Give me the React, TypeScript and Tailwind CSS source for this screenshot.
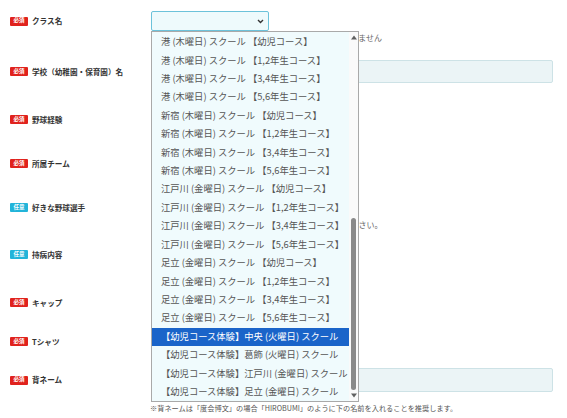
import React from "react";

const options = [
    "港 (木曜日) スクール 【幼児コース】",
    "港 (木曜日) スクール 【1,2年生コース】",
    "港 (木曜日) スクール 【3,4年生コース】",
    "港 (木曜日) スクール 【5,6年生コース】",
    "新宿 (木曜日) スクール 【幼児コース】",
    "新宿 (木曜日) スクール 【1,2年生コース】",
    "新宿 (木曜日) スクール 【3,4年生コース】",
    "新宿 (木曜日) スクール 【5,6年生コース】",
    "江戸川 (金曜日) スクール 【幼児コース】",
    "江戸川 (金曜日) スクール 【1,2年生コース】",
    "江戸川 (金曜日) スクール 【3,4年生コース】",
    "江戸川 (金曜日) スクール 【5,6年生コース】",
    "足立 (金曜日) スクール 【幼児コース】",
    "足立 (金曜日) スクール 【1,2年生コース】",
    "足立 (金曜日) スクール 【3,4年生コース】",
    "足立 (金曜日) スクール 【5,6年生コース】",
    "【幼児コース体験】中央 (火曜日) スクール",
    "【幼児コース体験】葛飾 (火曜日) スクール",
    "【幼児コース体験】江戸川 (金曜日) スクール",
    "【幼児コース体験】足立 (金曜日) スクール",
];

const Badge = ({required}: { required: boolean }) => (
    <span
        className={`flex h-[9px] w-[18px] items-center justify-center rounded-[1px] text-[5.5px] font-bold leading-none text-white ${required ? "bg-[#e0221d]" : "bg-[#22b4d9]"}`}>
        {required ? "必須" : "任意"}
    </span>
);

const Label = ({required, text}: { required: boolean; text: string }) => (
    <div className="flex h-[23px] w-[151px] shrink-0 items-center gap-[4px] pl-[10px]">
        <Badge required={required}/>
        <span className="text-[7.6px] font-bold text-[#333]">{text}</span>
    </div>
);

const SmallSelect = () => (
    <div className="h-[23px] w-[118px] rounded-[2px] border border-[#cde2e6] bg-[#ebf4f6]"/>
);

const WideInput = () => (
    <div className="h-[23px] w-[402px] rounded-[2px] border border-[#cde2e6] bg-[#ebf4f6]"/>
);

export default function App() {
    return (
        <div className="relative h-[418px] w-[567px] overflow-hidden bg-white font-['Noto_Sans_CJK_JP','Noto_Sans',sans-serif]">

            {/* クラス名 */}
            <div className="flex h-[46px] items-start pt-[11px]">
                <div className="flex h-[20px] w-[151px] shrink-0 items-center gap-[4px] pl-[10px]">
                    <Badge required/>
                    <span className="text-[7.6px] font-bold text-[#333]">クラス名</span>
                </div>
                <div className="flex flex-col">
                    <div
                        className="flex h-[20px] w-[118px] items-center justify-end rounded-[2px] border border-[#6cc2da] bg-[#eefafc] pr-[4px]">
                        <svg width="7" height="5" viewBox="0 0 7 5">
                            <path d="M1 1 L3.5 3.5 L6 1" fill="none" stroke="#333" strokeWidth="1.4"/>
                        </svg>
                    </div>
                    <p className="mt-[2px] whitespace-nowrap text-[8px] leading-[10px] text-[#666]">
                        ※クラスは定員に達し次第締切となり、後から変更はできません
                    </p>
                </div>
            </div>

            {/* 学校名 */}
            <div className="flex h-[50px] items-start pt-[14px]">
                <Label required text="学校（幼稚園・保育園）名"/>
                <WideInput/>
            </div>

            {/* 野球経験 */}
            <div className="flex h-[45px] items-start pt-[12px]">
                <Label required text="野球経験"/>
                <SmallSelect/>
            </div>

            {/* 所属チーム */}
            <div className="flex h-[44px] items-start pt-[11px]">
                <Label required text="所属チーム"/>
                <SmallSelect/>
            </div>

            {/* 好きな野球選手 */}
            <div className="flex h-[46px] items-start pt-[11px]">
                <Label required={false} text="好きな野球選手"/>
                <div className="flex flex-col">
                    <SmallSelect/>
                    <p className="mt-[1px] whitespace-nowrap text-[8px] leading-[10px] text-[#666]">
                        ※好きな野球選手がいれば、チーム名と一緒にご記入ください。
                    </p>
                </div>
            </div>

            {/* 持病内容 */}
            <div className="flex h-[48px] items-start pt-[12px]">
                <Label required={false} text="持病内容"/>
                <SmallSelect/>
            </div>

            {/* キャップ */}
            <div className="flex h-[43px] items-start pt-[12px]">
                <Label required text="キャップ"/>
                <SmallSelect/>
            </div>

            {/* Tシャツ */}
            <div className="flex h-[38px] items-start pt-[8px]">
                <Label required text="Tシャツ"/>
                <SmallSelect/>
            </div>

            {/* 背ネーム */}
            <div className="flex items-start pt-[8px]">
                <div className="flex h-[24px] w-[151px] shrink-0 items-center gap-[4px] pl-[10px]">
                    <Badge required/>
                    <span className="text-[7.6px] font-bold text-[#333]">背ネーム</span>
                </div>
                <div className="flex flex-col">
                    <div className="h-[24px] w-[402px] rounded-[2px] border border-[#cde2e6] bg-[#ebf4f6]"/>
                    <p className="-ml-[1px] mt-[11px] whitespace-nowrap text-[7.2px] leading-[10px] text-[#555]">
                        ※背ネームは「度会博文」の場合「HIROBUMI」のように下の名前を入れることを推奨します。
                    </p>
                </div>
            </div>

            {/* open dropdown list */}
            <div
                className="absolute left-[151px] top-[31px] flex h-[371px] w-[208px] border border-[#a9a9a9] bg-[#f0fbfd]">
                <ul className="flex flex-1 flex-col pt-[1px]">
                    {options.map((o, i) => (
                        <li
                            key={o}
                            className={`flex h-[18.45px] items-center whitespace-nowrap pl-[9px] text-[9.3px] ${i === 16 ? "bg-[#1a64c9] text-white" : "text-[#555]"}`}>
                            {o}
                        </li>
                    ))}
                </ul>
                <div className="flex w-[9px] flex-col items-center bg-[#fafafa] py-[3px]">
                    <svg width="6" height="5" viewBox="0 0 6 5">
                        <path d="M0 4.5 L3 0.5 L6 4.5 Z" fill="#606060"/>
                    </svg>
                    <div className="flex-1"/>
                    <div className="mb-[3px] h-[172px] w-[5px] rounded-full bg-[#8a8a8a]"/>
                    <svg width="6" height="5" viewBox="0 0 6 5">
                        <path d="M0 0.5 L3 4.5 L6 0.5 Z" fill="#606060"/>
                    </svg>
                </div>
            </div>
        </div>
    );
}
